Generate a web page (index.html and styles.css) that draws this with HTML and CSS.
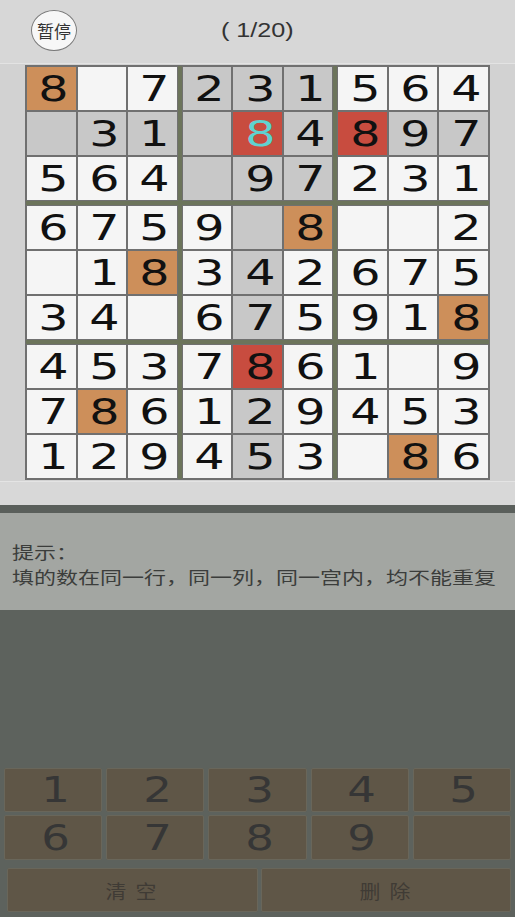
FILE: index.html
```html
<!DOCTYPE html>
<html lang="zh">
<head>
<meta charset="utf-8">
<title>数独</title>
<link rel="stylesheet" href="styles.css">
</head>
<body>
<div class="page">
  <header class="header">
    <button class="pause">暂停</button>
    <div class="title"><span>( 1/20)</span></div>
    <div></div>
  </header>

  <section class="board-area">
    <div class="board">
      <div class="block">
        <div class="cell or"><span>8</span></div><div class="cell"></div><div class="cell"><span>7</span></div>
        <div class="cell g"></div><div class="cell g"><span>3</span></div><div class="cell g"><span>1</span></div>
        <div class="cell"><span>5</span></div><div class="cell"><span>6</span></div><div class="cell"><span>4</span></div>
      </div>
      <div class="block">
        <div class="cell g"><span>2</span></div><div class="cell g"><span>3</span></div><div class="cell g"><span>1</span></div>
        <div class="cell g"></div><div class="cell red sel"><span>8</span></div><div class="cell g"><span>4</span></div>
        <div class="cell g"></div><div class="cell g"><span>9</span></div><div class="cell g"><span>7</span></div>
      </div>
      <div class="block">
        <div class="cell"><span>5</span></div><div class="cell"><span>6</span></div><div class="cell"><span>4</span></div>
        <div class="cell red"><span>8</span></div><div class="cell g"><span>9</span></div><div class="cell g"><span>7</span></div>
        <div class="cell"><span>2</span></div><div class="cell"><span>3</span></div><div class="cell"><span>1</span></div>
      </div>

      <div class="block">
        <div class="cell"><span>6</span></div><div class="cell"><span>7</span></div><div class="cell"><span>5</span></div>
        <div class="cell"></div><div class="cell"><span>1</span></div><div class="cell or"><span>8</span></div>
        <div class="cell"><span>3</span></div><div class="cell"><span>4</span></div><div class="cell"></div>
      </div>
      <div class="block">
        <div class="cell"><span>9</span></div><div class="cell g"></div><div class="cell or"><span>8</span></div>
        <div class="cell"><span>3</span></div><div class="cell g"><span>4</span></div><div class="cell"><span>2</span></div>
        <div class="cell"><span>6</span></div><div class="cell g"><span>7</span></div><div class="cell"><span>5</span></div>
      </div>
      <div class="block">
        <div class="cell"></div><div class="cell"></div><div class="cell"><span>2</span></div>
        <div class="cell"><span>6</span></div><div class="cell"><span>7</span></div><div class="cell"><span>5</span></div>
        <div class="cell"><span>9</span></div><div class="cell"><span>1</span></div><div class="cell or"><span>8</span></div>
      </div>

      <div class="block">
        <div class="cell"><span>4</span></div><div class="cell"><span>5</span></div><div class="cell"><span>3</span></div>
        <div class="cell"><span>7</span></div><div class="cell or"><span>8</span></div><div class="cell"><span>6</span></div>
        <div class="cell"><span>1</span></div><div class="cell"><span>2</span></div><div class="cell"><span>9</span></div>
      </div>
      <div class="block">
        <div class="cell"><span>7</span></div><div class="cell red"><span>8</span></div><div class="cell"><span>6</span></div>
        <div class="cell"><span>1</span></div><div class="cell g"><span>2</span></div><div class="cell"><span>9</span></div>
        <div class="cell"><span>4</span></div><div class="cell g"><span>5</span></div><div class="cell"><span>3</span></div>
      </div>
      <div class="block">
        <div class="cell"><span>1</span></div><div class="cell"></div><div class="cell"><span>9</span></div>
        <div class="cell"><span>4</span></div><div class="cell"><span>5</span></div><div class="cell"><span>3</span></div>
        <div class="cell"></div><div class="cell or"><span>8</span></div><div class="cell"><span>6</span></div>
      </div>
    </div>
  </section>

  <div class="spacer"></div>
  <div class="divider"></div>

  <section class="hint">
    <div class="hint-line"><span>提示：</span></div>
    <div class="hint-line"><span>填的数在同一行，同一列，同一宫内，均不能重复</span></div>
  </section>

  <section class="bottom">
    <div class="pad">
      <div class="keys">
        <button class="key"><span>1</span></button>
        <button class="key"><span>2</span></button>
        <button class="key"><span>3</span></button>
        <button class="key"><span>4</span></button>
        <button class="key"><span>5</span></button>
      </div>
      <div class="keys keys-2">
        <button class="key"><span>6</span></button>
        <button class="key"><span>7</span></button>
        <button class="key"><span>8</span></button>
        <button class="key"><span>9</span></button>
        <button class="key"></button>
      </div>
      <div class="actions">
        <button class="action"><span>清 空</span></button>
        <button class="action"><span>删 除</span></button>
      </div>
    </div>
  </section>
</div>
</body>
</html>
```

FILE: styles.css
```css
html, body {
  margin: 0;
  padding: 0;
}

body {
  width: 515px;
  height: 917px;
  overflow: hidden;
  font-family: "Liberation Sans", "Noto Sans CJK SC", sans-serif;
  background: #5d625d;
}

.page {
  display: flex;
  flex-direction: column;
  height: 917px;
  overflow: hidden;
}

/* header */
.header {
  height: 63px;
  flex: none;
  background: #d7d7d7;
  border-bottom: 1px solid #e3e3e3;
  display: grid;
  grid-template-columns: 1fr auto 1fr;
  align-items: center;
}

.pause {
  justify-self: start;
  margin-left: 31px;
  margin-top: -3px;
  width: 46px;
  height: 41px;
  border-radius: 50%;
  border: 1.5px solid #7a7a7a;
  background: #f7f7f7;
  padding: 0;
  font-family: "Noto Sans CJK SC", sans-serif;
  font-size: 17px;
  color: #333;
}

.title {
  font-size: 21px;
  color: #333;
  margin-top: -3px;
}

.title span {
  display: inline-block;
  transform: scaleX(1.2);
}

/* board */
.board-area {
  flex: none;
  background: #d2d2d2;
  padding: 1px 0 1px 25px;
  border-bottom: 1px solid #e4e4e4;
}

.board {
  width: 465px;
  height: 415px;
  box-sizing: border-box;
  display: grid;
  grid-template-columns: repeat(3, 1fr);
  grid-template-rows: repeat(3, 1fr);
  gap: 4px;
  background: #6c745b;
  border: 1px solid #707070;
}

.block {
  display: grid;
  grid-template-columns: repeat(3, 1fr);
  grid-template-rows: repeat(3, 1fr);
  gap: 2px;
  background: #707070;
  border: 1px solid #707070;
}

.cell {
  background: #f5f5f5;
  display: flex;
  align-items: center;
  justify-content: center;
  padding-left: 5px;
  font-family: "DejaVu Sans", sans-serif;
  font-size: 36px;
  line-height: 1;
  color: #111;
  overflow: hidden;
}

.cell span {
  display: inline-block;
  transform: scaleX(1.32);
}

.cell.g { background: #c8c8c8; }
.cell.or { background: #cd8f5a; }
.cell.red { background: #c84c3f; }
.cell.sel { color: #5fd2d0; }

.spacer {
  height: 23px;
  flex: none;
  background: #d8d8d8;
}

.divider {
  height: 8px;
  flex: none;
  background: #5a5f5b;
}

/* hint */
.hint {
  height: 97px;
  flex: none;
  box-sizing: border-box;
  background: #a3a6a2;
  padding: 26px 0 0 12px;
  overflow: hidden;
}

.hint-line {
  height: 25px;
  font-family: "Noto Sans CJK SC", sans-serif;
  font-size: 17px;
  line-height: 25px;
  color: #3b3d3b;
  white-space: nowrap;
}

.hint-line span {
  display: inline-block;
  transform: scaleX(1.294);
  transform-origin: left center;
}

/* keypad */
.bottom {
  flex: 1;
  display: flex;
  flex-direction: column;
  justify-content: flex-end;
  background: #5d625d;
}

.pad {
  padding: 0 4px 5px 4px;
  display: flex;
  flex-direction: column;
}

.keys {
  display: grid;
  grid-template-columns: repeat(5, 1fr);
  gap: 4px;
  height: 44px;
}

.keys-2 {
  margin-top: 3px;
  height: 45px;
}

.key, .action {
  background: #5f5647;
  border: 1px solid #69665a;
  border-radius: 2px;
  padding: 0;
  margin: 0;
  color: #363636;
  display: flex;
  align-items: center;
  justify-content: center;
}

.key {
  font-family: "DejaVu Sans", sans-serif;
  font-size: 36px;
  line-height: 1;
  padding-left: 4px;
}

.key span {
  display: inline-block;
  transform: scaleX(1.25);
}

.actions {
  margin-top: 8px;
  height: 44px;
  display: grid;
  grid-template-columns: 1fr 1fr;
  gap: 3px;
  padding-left: 3px;
}

.action {
  font-family: "Noto Sans CJK SC", sans-serif;
  font-size: 19px;
  color: #3f3b35;
  white-space: pre;
}

.action span {
  display: inline-block;
  transform: scaleX(1.1);
  letter-spacing: 2px;
}
```
